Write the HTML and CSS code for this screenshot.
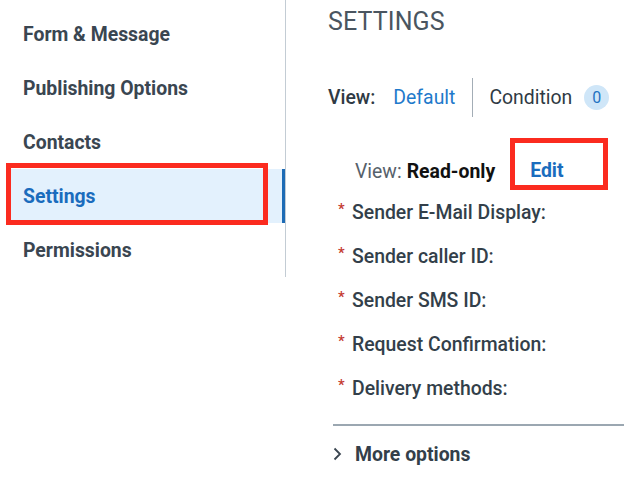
FILE: index.html
```html
<!DOCTYPE html>
<html>
<head>
<meta charset="utf-8">
<link rel="stylesheet" href="styles.css">
</head>
<body>
<div class="page">
  <nav class="nav">
    <div class="nav-item">Form &amp; Message</div>
    <div class="nav-item">Publishing Options</div>
    <div class="nav-item">Contacts</div>
    <div class="nav-item active">Settings<span class="mark mark-nav"></span></div>
    <div class="nav-item">Permissions</div>
  </nav>
  <main class="main">
    <h1 class="title">SETTINGS</h1>
    <div class="view-row">
      <span class="view-label">View:</span>
      <span class="view-link">Default</span>
      <span class="sep"></span>
      <span class="cond">Condition</span>
      <span class="badge">0</span>
    </div>
    <section class="section">
      <div class="ro-row">
        <span class="ro-label">View:</span>
        <span class="ro-value">Read-only</span>
        <span class="edit">Edit<span class="mark mark-edit"></span></span>
      </div>
      <div class="field"><span class="req">*</span>Sender E-Mail Display:</div>
      <div class="field"><span class="req">*</span>Sender caller ID:</div>
      <div class="field"><span class="req">*</span>Sender SMS ID:</div>
      <div class="field"><span class="req">*</span>Request Confirmation:</div>
      <div class="field"><span class="req">*</span>Delivery methods:</div>
      <div class="divider"></div>
      <div class="more">
        <svg class="chev" width="9" height="14" viewBox="0 0 9 14"><path d="M1.5 1.5 L7 7 L1.5 12.5" fill="none" stroke="#3a4550" stroke-width="1.8"/></svg>
        <span>More options</span>
      </div>
    </section>
  </main>
</div>
</body>
</html>
```
FILE: styles.css
```css
* { box-sizing: border-box; }
body {
  margin: 0;
  background: #fff;
  font-family: Roboto, "Liberation Sans", sans-serif;
  color: #36414c;
}
.page {
  display: flex;
  align-items: flex-start;
}
.nav {
  width: 286px;
  flex: none;
  padding: 7px 0 0 8px;
  border-right: 1px solid #c3ccd4;
  height: 277px;
}
.nav-item {
  position: relative;
  height: 54px;
  display: flex;
  align-items: center;
  padding-left: 15px;
  font-size: 19.4px;
  font-weight: 700;
  color: #3a4651;
  border-right: 3px solid transparent;
}
.nav-item.active {
  background: #e3f1fd;
  color: #1a6cbd;
  border-right-color: #1d6bb5;
}
.mark {
  position: absolute;
  border: 5px solid #fb2b1f;
}
.mark-nav {
  left: -2px;
  top: -6px;
  width: 262px;
  height: 62px;
}
.main {
  flex: 1;
  padding-left: 42px;
}
.title {
  margin: 7px 0 0;
  font-size: 25px;
  line-height: 30px;
  font-weight: 400;
  color: #4a5560;
  letter-spacing: 0.1px;
}
.view-row {
  margin-top: 40px;
  height: 40px;
  display: flex;
  align-items: center;
  font-size: 19.4px;
}
.view-label {
  color: #2f3a44;
  font-weight: 500;
}
.view-link {
  margin-left: 18px;
  color: #1f7acb;
}
.sep {
  width: 1px;
  height: 39px;
  background: #a3adb6;
  margin: 0 16px 0 17px;
}
.cond {
  color: #2f3a44;
}
.badge {
  margin-left: 12px;
  width: 25px;
  height: 25px;
  border-radius: 50%;
  background: #cfe6f8;
  color: #1f73c2;
  font-size: 16px;
  display: flex;
  align-items: center;
  justify-content: center;
}
.section {
  margin-left: 5px;
}
.ro-row {
  margin-top: 35px;
  height: 38px;
  display: flex;
  align-items: center;
  padding-left: 22px;
  font-size: 19.4px;
}
.ro-label {
  color: #56616b;
}
.ro-value {
  margin-left: 5px;
  font-weight: 700;
  color: #111;
}
.edit {
  position: relative;
  margin-left: 35px;
  line-height: 38px;
  font-weight: 700;
  color: #1a6cbd;
}
.mark-edit {
  left: -20px;
  top: -14px;
  width: 98px;
  height: 52px;
}
.field {
  height: 44px;
  display: flex;
  align-items: center;
  padding-left: 5px;
  font-size: 19.4px;
  font-weight: 500;
  color: #333f4a;
}
.req {
  color: #c43a31;
  font-size: 15px;
  width: 14px;
  margin-top: -6px;
}
.divider {
  margin-top: 14px;
  height: 2px;
  background: #9ba7b1;
}
.more {
  margin-top: 8px;
  height: 40px;
  display: flex;
  align-items: center;
  font-size: 19.4px;
  font-weight: 700;
  color: #333f4a;
}
.chev {
  margin-right: 13px;
}
```
